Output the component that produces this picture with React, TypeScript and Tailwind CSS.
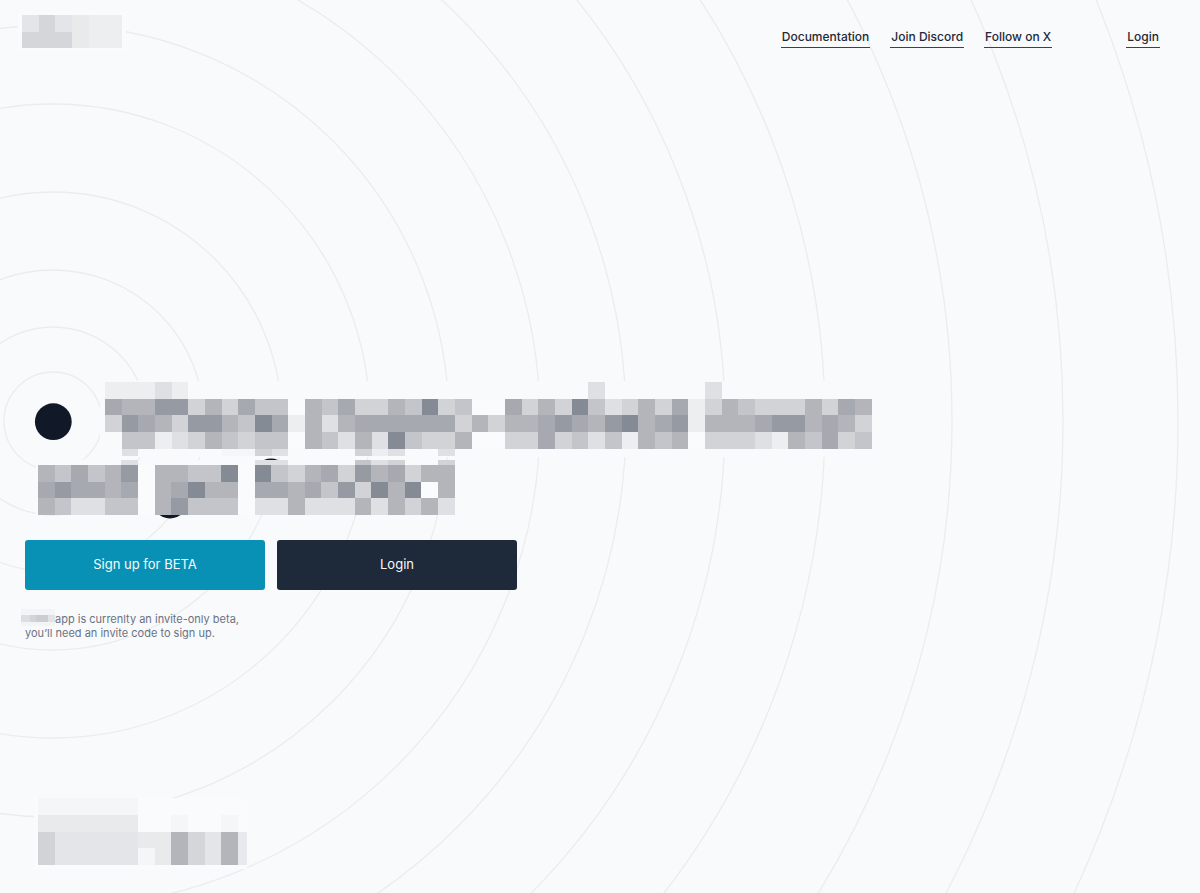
const rings = [49, 94, 151, 229, 317, 396, 487, 573, 672, 772, 899, 1010, 1125];

const palette: Record<string, string> = {
  w: "#fafbfc",
  v: "#f5f6f8",
  a: "#edeeef",
  b: "#dfe0e3",
  c: "#d1d3d6",
  d: "#c3c5ca",
  e: "#b3b5bb",
  f: "#a7a9b0",
  g: "#959aa3",
  h: "#858b94",
  "1": "#e9eaec",
  "2": "#e4e5e8",
  "3": "#d5d6da",
};

type Row = { y: number; h: number; cells: string };

const cell = 50 / 3;

function Mosaic({ rows }: { rows: Row[] }) {
  return (
    <g shapeRendering="crispEdges">
      {rows.map((row) =>
        row.cells.split("").map((c, i) =>
          palette[c] ? (
            <rect
              key={`${row.y}-${i}`}
              x={Math.round(i * cell)}
              y={row.y}
              width={Math.round((i + 1) * cell) - Math.round(i * cell)}
              height={row.h}
              fill={palette[c]}
            />
          ) : null
        )
      )}
    </g>
  );
}

const headlineTop: Row[] = [
  { y: 1, h: 17, cells: "aaaba........................b......b" },
  { y: 18, h: 16, cells: "feeggcecfddwedfccedhcdwwfcechdbcecfacedcccecfe" },
  { y: 34, h: 17, cells: "cgfecggedhfaebeffffffcecefgfeghefgaa".slice(0, 24) + "eefgfeghefgaeeefggefec" },
  { y: 51, h: 17, cells: ".ddabcedcddwedbebhdcceww" + "ccfcdbdaedewcccbaedfcd" },
  { y: 68, h: 7, cells: ".b.....vvcb....cab..b" },
];

const headlineBottom: Row[] = [
  { y: 0, h: 5, cells: ".....b.......bb....dbc..c" },
  { y: 5, h: 17, cells: "edfdegweeddhwhdcefcgefcee" },
  { y: 22, h: 16, cells: "fgffefwefheewffefdgchehwe" },
  { y: 38, h: 17, cells: "edbbddwegdddwbbebbbebeceb" },
];

const logoRows: Row[] = [
  { y: 0, h: 17, cells: "2321aa" },
  { y: 17, h: 16, cells: "3331aa" },
];

const footerRows: Row[] = [
  { y: 0, h: 17, cells: "vvvvvv" },
  { y: 17, h: 17, cells: "111111wwvwwv" },
  { y: 34, h: 16, cells: "c2222211e32e" },
  { y: 50, h: 17, cells: "c22222v1e32e" },
];

function Rings() {
  return (
    <svg aria-hidden="true" className="absolute inset-0 h-full w-full" fill="none">
      <g stroke="#ebecee" strokeWidth="1.3">
        {rings.map((r) => (
          <circle key={r} cx="53" cy="421" r={r} />
        ))}
      </g>
      <g fill="#111827">
        <circle cx="53.3" cy="421.7" r="18.4" />
        <circle cx="170" cy="500" r="18.4" />
        <circle cx="271" cy="477" r="18.4" />
      </g>
    </svg>
  );
}

const linkClass = "border-b border-[#374151] px-px pb-0.5";

export default function App() {
  return (
    <div className="relative isolate flex min-h-screen flex-col overflow-hidden bg-[#f9fafc] font-['Inter',sans-serif] text-gray-800">
      <div className="absolute inset-0 -z-10">
        <Rings />
      </div>

      <header className="flex items-start justify-between pt-3 pr-10 pl-[18px]">
        <a href="#home" aria-label="Home">
          <svg className="block" width="108" height="40" viewBox="0 0 108 40">
            <rect width="108" height="40" fill="#fafbfc" />
            <g transform="translate(4 3)">
              <Mosaic rows={logoRows} />
            </g>
          </svg>
        </a>
        <nav className="flex gap-5 pt-[17px] text-xs font-medium">
          <a href="#documentation" className={linkClass}>Documentation</a>
          <a href="#discord" className={linkClass}>Join Discord</a>
          <a href="#follow" className={linkClass}>Follow on X</a>
          <a href="#login" className={`ml-[54px] ${linkClass}`}>Login</a>
        </nav>
      </header>

      <main className="flex flex-1 flex-col items-start pt-[329px]">
        <h1 className="pl-9">
          <svg role="img" aria-label="Headline" className="block max-w-none" width="852" height="134" viewBox="0 0 852 134">
            <rect x="64" width="788" height="76" fill="#f9fafc" />
            <rect y="79" width="420" height="55" fill="#f9fafc" />
            <g transform="translate(69 0)">
              <Mosaic rows={headlineTop} />
            </g>
            <g transform="translate(2 79)">
              <Mosaic rows={headlineBottom} />
            </g>
          </svg>
        </h1>

        <div className="mt-[25px] flex gap-3 pl-[25px] text-[13px] text-gray-50">
          <button type="button" className="h-[50px] w-60 rounded-[3px] bg-[#0891b5]">Sign up for BETA</button>
          <button type="button" className="h-[50px] w-60 rounded-[3px] bg-gray-800">Login</button>
        </div>

        <p className="mt-[22px] pl-[25px] text-[11px] leading-[14px] text-gray-500">
          <span className="-ml-1 flex items-center">
            <svg aria-hidden="true" width="34" height="14" viewBox="0 0 34 14" className="overflow-visible">
              <rect y="-3" width="34" height="17" fill="#f3f4f6" />
              <rect y="3" width="9" height="7" fill="#dddee1" />
              <rect x="9" y="3" width="6" height="7" fill="#d3d4d8" />
              <rect x="15" y="3" width="12" height="7" fill="#cccdd1" />
              <rect x="27" y="3" width="7" height="7" fill="#e2e3e6" />
            </svg>
            app is currenlty an invite-only beta,
          </span>
          you’ll need an invite code to sign up.
        </p>
      </main>

      <footer className="pb-6 pl-[34px]">
        <svg role="img" aria-label="Footer logo" className="block" width="215" height="71" viewBox="0 0 215 71">
          <rect width="213" height="71" fill="#fafbfc" />
          <g transform="translate(4 0)">
            <Mosaic rows={footerRows} />
            <rect x="200" y="34" width="9" height="33" fill="#e8e9ec" />
          </g>
        </svg>
      </footer>
    </div>
  );
}
